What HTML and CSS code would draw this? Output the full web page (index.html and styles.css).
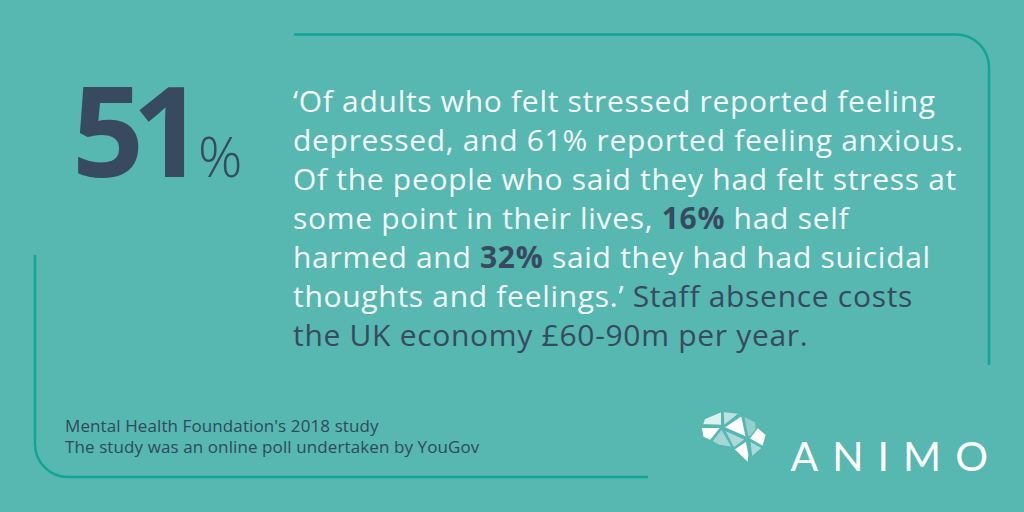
FILE: index.html
```html
<!DOCTYPE html>
<html lang="en">
<head>
<meta charset="utf-8">
<title>Animo – 51%</title>
<link rel="stylesheet" href="styles.css">
</head>
<body>
<div class="card">
  <svg class="frame" width="1024" height="512" viewBox="0 0 1024 512" aria-hidden="true">
    <path d="M294 34.5 H956 A33 33 0 0 1 989 67.5 V365" />
    <path d="M35 255 V444 A33 33 0 0 0 68 477 H648" />
  </svg>
  <div class="main">
    <div class="stat"><span class="num">51</span><span class="pct">%</span></div>
    <p class="quote">‘Of adults who felt stressed reported feeling<br>depressed, and 61% reported feeling anxious.<br>Of the people who said they had felt stress at<br>some point in their lives, <b class="dark">16%</b> had self<br>harmed and <b class="dark">32%</b> said they had had suicidal<br>thoughts and feelings.’ <span class="dark">Staff absence costs<br>the UK economy £60-90m per year.</span></p>
  </div>
  <div class="footer">
    <p class="source"><span class="line">Mental Health Foundation's 2018 study</span><span class="line">The study was an online poll undertaken by YouGov</span></p>
    <div class="logo">
      <svg class="brain" width="80" height="64" viewBox="0 0 240 192" aria-hidden="true">
        <g stroke="#57b7b1" stroke-width="4" stroke-linejoin="round">
          <polygon points="28,44 80,22 80,64 22,62" fill="#fff" fill-opacity="0.8"/>
          <polygon points="84,22 134,28 86,66" fill="#fff" fill-opacity="0.6"/>
          <polygon points="18,70 78,70 46,110 24,100" fill="#fff"/>
          <polygon points="50,112 80,74 112,130 72,124" fill="#fff" fill-opacity="0.45"/>
          <polygon points="86,70 140,34 154,100" fill="#fff"/>
          <polygon points="146,36 182,54 186,92 158,100" fill="#fff" fill-opacity="0.35"/>
          <polygon points="188,70 214,92 204,128 162,104" fill="#fff"/>
          <polygon points="88,78 152,106 116,132" fill="#fff" fill-opacity="0.5"/>
          <polygon points="116,136 154,110 162,150 160,178" fill="#fff"/>
          <polygon points="164,110 202,132 170,160" fill="#fff" fill-opacity="0.5"/>
        </g>
      </svg>
      <span class="wordmark">ANIMO</span>
    </div>
  </div>
</div>
</body>
</html>
```
FILE: styles.css
```css
html, body {
  margin: 0;
  padding: 0;
}

body {
  background: #57b7b1;
  font-family: "Open Sans", "Noto Sans", sans-serif;
}

.card {
  position: relative;
  width: 1024px;
  height: 512px;
  background: #57b7b1;
  overflow: hidden;
  display: flex;
  flex-direction: column;
}

.frame {
  position: absolute;
  left: 0;
  top: 0;
  pointer-events: none;
}

.frame path {
  fill: none;
  stroke: #12a596;
  stroke-width: 2.5;
}

.main {
  display: flex;
  padding-top: 65px;
  padding-left: 72px;
}

.stat {
  flex: 0 0 221px;
  display: flex;
  align-items: baseline;
  color: #374a5f;
}

.num {
  font-size: 126px;
  line-height: 126px;
  font-weight: 700;
  letter-spacing: -12px;
}

.pct {
  font-size: 55px;
  line-height: 1;
  font-weight: 300;
  margin-left: 6px;
}

.quote {
  margin: 16px 0 0 0;
  font-size: 30px;
  line-height: 39px;
  color: #f4fbfa;
  letter-spacing: 0.7px;
}

.dark {
  color: #374a5f;
}

b.dark {
  font-weight: 700;
}

.footer {
  display: flex;
  justify-content: space-between;
  align-items: flex-start;
  margin-top: 50px;
  padding-left: 65px;
  padding-right: 22px;
}

.source {
  margin: 11px 0 0 0;
  font-size: 17px;
  line-height: 21px;
  color: #2f4a5b;
  letter-spacing: 0.1px;
}

.line {
  display: block;
}

.logo {
  display: flex;
  align-items: flex-start;
}

.brain {
  display: block;
}

.wordmark {
  margin-left: 16px;
  margin-top: 31px;
  font-family: Lato, "Open Sans", sans-serif;
  font-size: 41px;
  line-height: 41px;
  letter-spacing: 14px;
  color: #ffffff;
}
```
